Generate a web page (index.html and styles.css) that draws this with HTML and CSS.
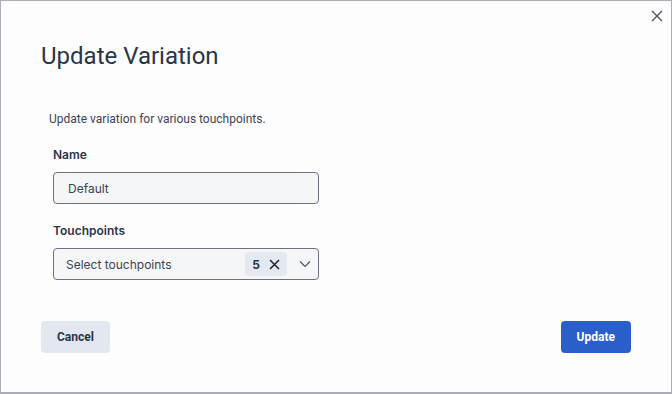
FILE: index.html
```html
<!DOCTYPE html>
<html lang="en">
<head>
<meta charset="UTF-8">
<meta name="viewport" content="width=device-width, initial-scale=1.0">
<title>Update Variation</title>
<link rel="stylesheet" href="styles.css">
</head>
<body>

<div class="dialog">
  <button class="close" aria-label="Close">
    <svg width="12" height="12" viewBox="0 0 12 12"><path d="M1 1L11 11M11 1L1 11" stroke="#4b5563" stroke-width="1.4" fill="none"/></svg>
  </button>

  <h2 class="title">Update Variation</h2>
  <p class="desc">Update variation for various touchpoints.</p>

  <form class="form">
    <label class="label" for="name">Name</label>
    <input class="field" type="text" id="name" value="Default">

    <label class="label">Touchpoints</label>
    <div class="field select">
      <span class="placeholder">Select touchpoints</span>
      <span class="chip">5
        <svg width="11" height="11" viewBox="0 0 11 11"><path d="M1 1L10 10M10 1L1 10" stroke="#1f2937" stroke-width="1.6" fill="none"/></svg>
      </span>
      <svg class="chevron" width="12" height="8" viewBox="0 0 12 8"><path d="M1 1.5L6 6.5L11 1.5" stroke="#4b5563" stroke-width="1.2" fill="none"/></svg>
    </div>
  </form>

  <div class="actions">
    <button class="btn btn-cancel">Cancel</button>
    <button class="btn btn-update">Update</button>
  </div>
</div>

</body>
</html>
```

FILE: styles.css
```css
body {
  margin: 0;
  font-family: 'Roboto', sans-serif;
  background-color: #fdfdfe;
}
.dialog {
  position: relative;
  box-sizing: border-box;
  width: 672px;
  height: 394px;
  border: 1px solid #a8adb7;
  border-bottom-width: 2px;
  background-color: #fdfdfe;
  padding: 41px 40px 0 40px;
  display: flex;
  flex-direction: column;
}
.close {
  position: absolute;
  top: 8px;
  right: 7px;
  width: 14px;
  height: 14px;
  padding: 1px;
  border: none;
  background: none;
  cursor: pointer;
}
.title {
  margin: 0;
  font-size: 24px;
  line-height: 28px;
  font-weight: 400;
  color: #2b3548;
}
.desc {
  margin: 41px 0 0 8px;
  font-size: 12px;
  line-height: 16px;
  color: #3c4453;
}
.form {
  margin: 20px 0 0 12px;
  display: flex;
  flex-direction: column;
  width: 266px;
}
.label {
  font-family: 'Inter', sans-serif;
  font-size: 12px;
  line-height: 16px;
  font-weight: 600;
  color: #2b3548;
  margin-bottom: 9px;
}
.field {
  box-sizing: border-box;
  height: 32px;
  width: 266px;
  border: 1px solid #6b7180;
  border-radius: 4px;
  background-color: #f5f6f8;
  font-family: 'Inter', sans-serif;
  font-size: 12px;
  color: #3c4453;
  padding: 0 14px;
  margin-bottom: 19px;
}
.select {
  display: flex;
  align-items: center;
  padding: 0 7px 0 12px;
}
.placeholder {
  flex: 1;
}
.chip {
  display: flex;
  align-items: center;
  gap: 9px;
  height: 24px;
  padding: 0 7px;
  background-color: #e4e8ef;
  border-radius: 4px;
  font-weight: 700;
  color: #2b3548;
  margin-right: 12px;
}
.actions {
  display: flex;
  justify-content: space-between;
  margin-top: 22px;
}
.btn {
  height: 32px;
  border: none;
  border-radius: 4px;
  font-family: 'Roboto', sans-serif;
  font-size: 12px;
  font-weight: 700;
  padding: 0 16px;
  cursor: pointer;
}
.btn-cancel {
  background-color: #e3e7ef;
  color: #2b3548;
}
.btn-update {
  background-color: #2a5fca;
  color: #fff;
}
```
